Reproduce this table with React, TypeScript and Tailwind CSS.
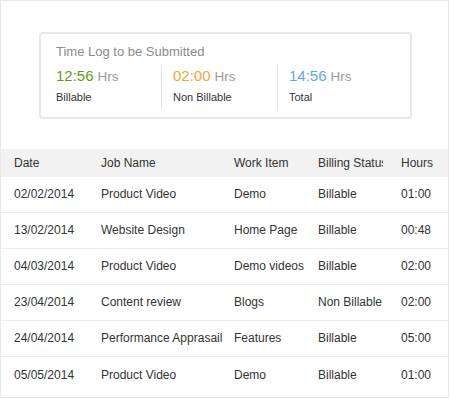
import React from 'react';

const rows = [
  { date: '02/02/2014', job: 'Product Video', item: 'Demo', status: 'Billable', hours: '01:00' },
  { date: '13/02/2014', job: 'Website Design', item: 'Home Page', status: 'Billable', hours: '00:48' },
  { date: '04/03/2014', job: 'Product Video', item: 'Demo videos', status: 'Billable', hours: '02:00' },
  { date: '23/04/2014', job: 'Content review', item: 'Blogs', status: 'Non Billable', hours: '02:00' },
  { date: '24/04/2014', job: 'Performance Apprasail', item: 'Features', status: 'Billable', hours: '05:00' },
  { date: '05/05/2014', job: 'Product Video', item: 'Demo', status: 'Billable', hours: '01:00' },
];

const Stat = ({ value, label, color }: { value: string; label: string; color: string }) => (
  <div className="flex flex-col">
    <div className="flex items-baseline gap-[4px] leading-none h-[20px]">
      <span className={`text-[15px] ${color}`}>{value}</span>
      <span className="text-[13.5px] text-[#9a9a9a]">Hrs</span>
    </div>
    <span className="mt-[4px] text-[11px] text-[#333] leading-none">{label}</span>
  </div>
);

export default function App() {
  return (
    <div
      className="w-[449px] h-[398px] border border-[#e8e8e8] bg-white overflow-hidden"
      style={{ fontFamily: '"Liberation Sans", Arial, sans-serif' }}
    >
      {/* Summary card */}
      <div className="mt-[31px] ml-[38px] w-[373px] h-[87px] border-2 border-[#e8e8e8] rounded-[4px] pl-[15px] pt-[11px]">
        <div className="text-[13px] text-[#8a8a8a] leading-none h-[14px]">Time Log to be Submitted</div>
        <div className="flex mt-[6px]">
          <div className="w-[105px] pt-[3px]">
            <Stat value="12:56" label="Billable" color="text-[#5f9f0e]" />
          </div>
          <div className="w-[116px] border-l border-[#e2e2e2] pl-[11px] pt-[3px] h-[44px]">
            <Stat value="02:00" label="Non Billable" color="text-[#f5a52e]" />
          </div>
          <div className="border-l border-[#e2e2e2] pl-[11px] pt-[3px] h-[44px]">
            <Stat value="14:56" label="Total" color="text-[#5baaea]" />
          </div>
        </div>
      </div>

      {/* Table */}
      <div className="mt-[30px] text-[12px] text-[#333]">
        <div className="grid grid-cols-[87px_133px_84px_83px_1fr] pl-[13px] h-[28px] items-center bg-[#f2f2f2]">
          <span>Date</span>
          <span>Job Name</span>
          <span>Work Item</span>
          <span className="w-[65px] overflow-hidden whitespace-nowrap">Billing Status</span>
          <span>Hours</span>
        </div>
        {rows.map((r, i) => (
          <div
            key={i}
            className={`grid grid-cols-[87px_133px_84px_83px_1fr] pl-[13px] h-[36px] items-center ${i < rows.length - 1 ? 'border-b border-[#ececec]' : ''}`}
          >
            <span className="-mt-[1px]">{r.date}</span>
            <span className="-mt-[1px] whitespace-nowrap">{r.job}</span>
            <span className="-mt-[1px] whitespace-nowrap">{r.item}</span>
            <span className="-mt-[1px] whitespace-nowrap">{r.status}</span>
            <span className="-mt-[1px]">{r.hours}</span>
          </div>
        ))}
      </div>
    </div>
  );
}
